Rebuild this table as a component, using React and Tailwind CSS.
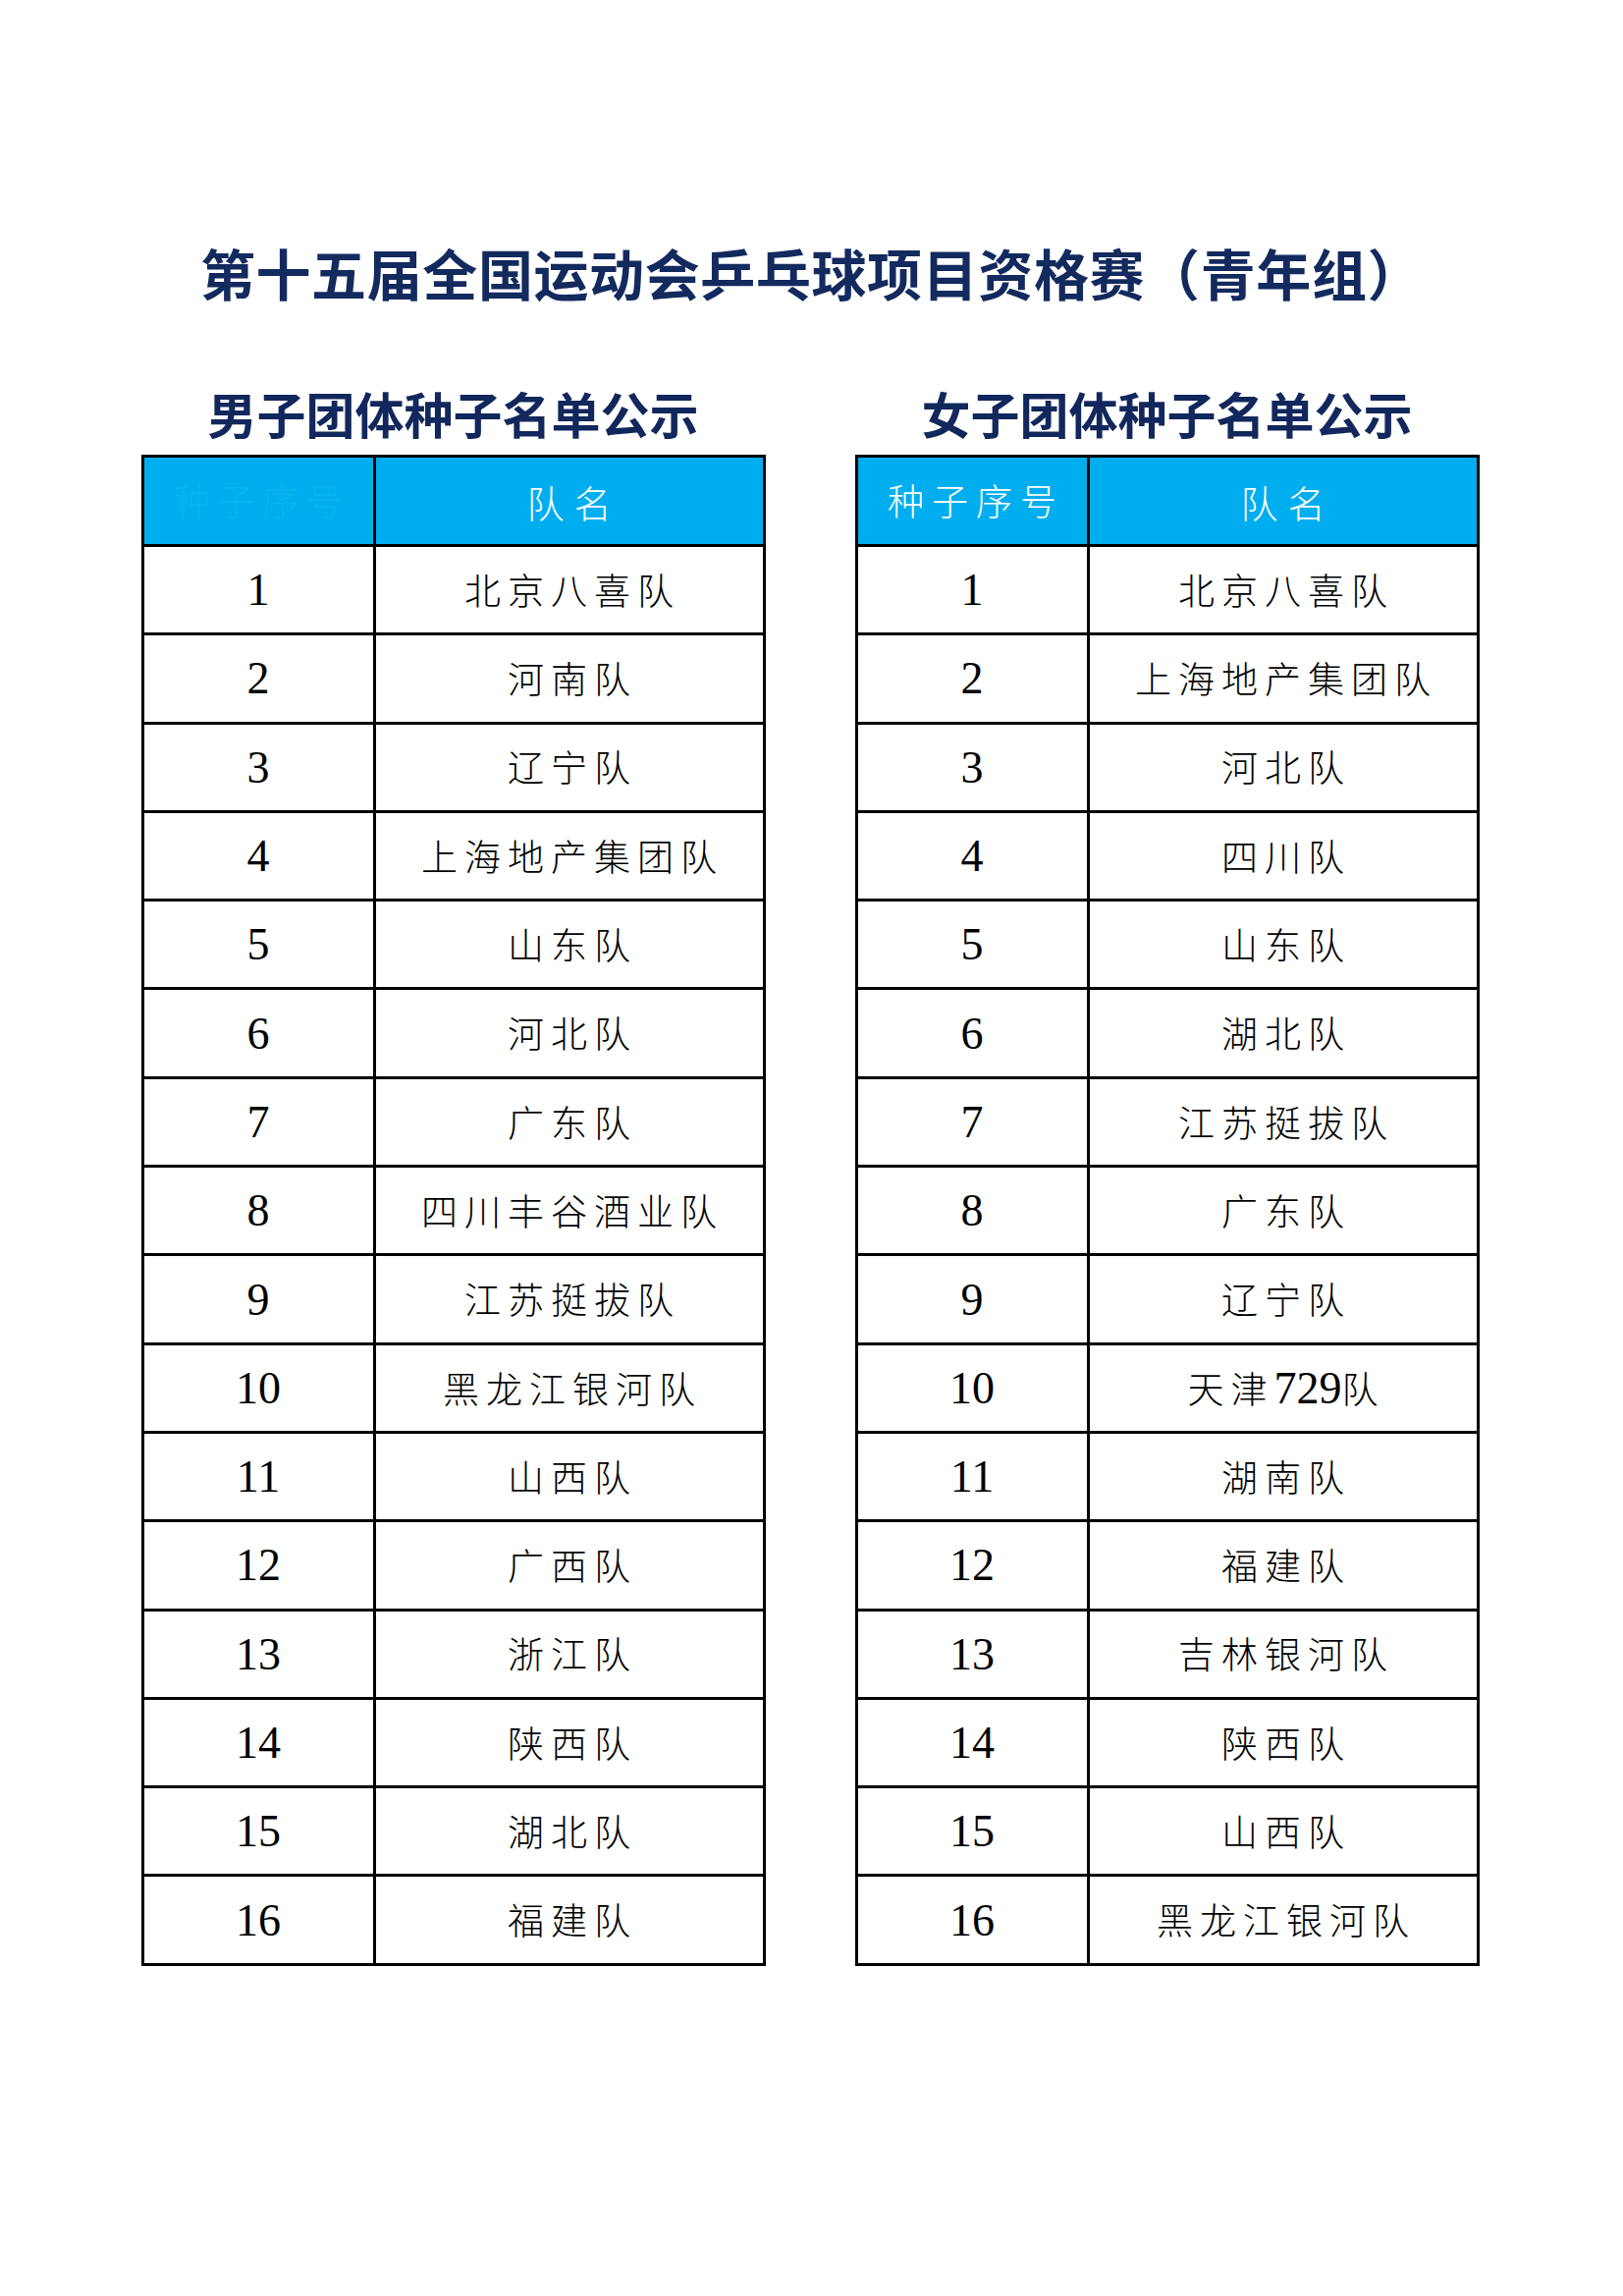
import React from "react";

const men = [
  "北京八喜队",
  "河南队",
  "辽宁队",
  "上海地产集团队",
  "山东队",
  "河北队",
  "广东队",
  "四川丰谷酒业队",
  "江苏挺拔队",
  "黑龙江银河队",
  "山西队",
  "广西队",
  "浙江队",
  "陕西队",
  "湖北队",
  "福建队",
];

const women = [
  "北京八喜队",
  "上海地产集团队",
  "河北队",
  "四川队",
  "山东队",
  "湖北队",
  "江苏挺拔队",
  "广东队",
  "辽宁队",
  "天津729队",
  "湖南队",
  "福建队",
  "吉林银河队",
  "陕西队",
  "山西队",
  "黑龙江银河队",
];

function Name({ text }) {
  const m = text.match(/^(.*?)(\d+)(.*)$/);
  if (!m) return <>{text}</>;
  return (
    <>
      {m[1]}
      <span className="font-['Liberation_Serif'] text-[46px] tracking-normal font-normal">{m[2]}</span>
      {m[3]}
    </>
  );
}

function Table({ title, teams, ghostHeader }) {
  return (
    <div className="flex w-[633px] flex-col items-center">
      <div className="h-[50px] whitespace-nowrap font-['Noto_Sans_CJK_SC',sans-serif] text-[50px] leading-[50px] font-bold text-[#12275c]">
        {title}
      </div>
      <table className="mt-[18px] w-[633px] table-fixed border-collapse">
        <colgroup>
          <col className="w-[236px]" />
          <col className="w-[397px]" />
        </colgroup>
        <thead>
          <tr className="h-[91px] bg-[#00aeef]">
            <th
              className={
                "border-[3px] border-black p-0 text-center font-['Noto_Sans_CJK_SC',sans-serif] text-[37px] font-light tracking-[8px] pl-[8px] " +
                (ghostHeader ? "text-[#0bb1ee]" : "text-white")
              }
            >
              种子序号
            </th>
            <th className="border-[3px] border-black p-0 pl-[10px] text-center font-['Noto_Sans_CJK_SC',sans-serif] text-[38px] font-light tracking-[10px] text-white">
              队名
            </th>
          </tr>
        </thead>
        <tbody>
          {teams.map((t, i) => (
            <tr key={i} className="h-[90.3px]">
              <td className="border-[3px] border-black p-0 text-center font-['Liberation_Serif',serif] text-[46px] text-black">
                {i + 1}
              </td>
              <td className="border-[3px] border-black p-0 pl-[7px] text-center font-['Noto_Sans_CJK_SC',sans-serif] text-[37px] font-light tracking-[7px] text-black whitespace-nowrap">
                <Name text={t} />
              </td>
            </tr>
          ))}
        </tbody>
      </table>
    </div>
  );
}

export default function App() {
  return (
    <div className="h-[2338px] w-[1653px] bg-white pt-[249px]">
      <div className="h-[56px] text-center whitespace-nowrap font-['Noto_Sans_CJK_SC',sans-serif] text-[56px] leading-[56px] font-bold tracking-[0.6px] text-[#132a5e]">
        第十五届全国运动会乒乓球项目资格赛（青年组）
      </div>
      <div className="mt-[90px] flex gap-[94px] pl-[145px]">
        <Table title="男子团体种子名单公示" teams={men} ghostHeader />
        <Table title="女子团体种子名单公示" teams={women} />
      </div>
    </div>
  );
}
